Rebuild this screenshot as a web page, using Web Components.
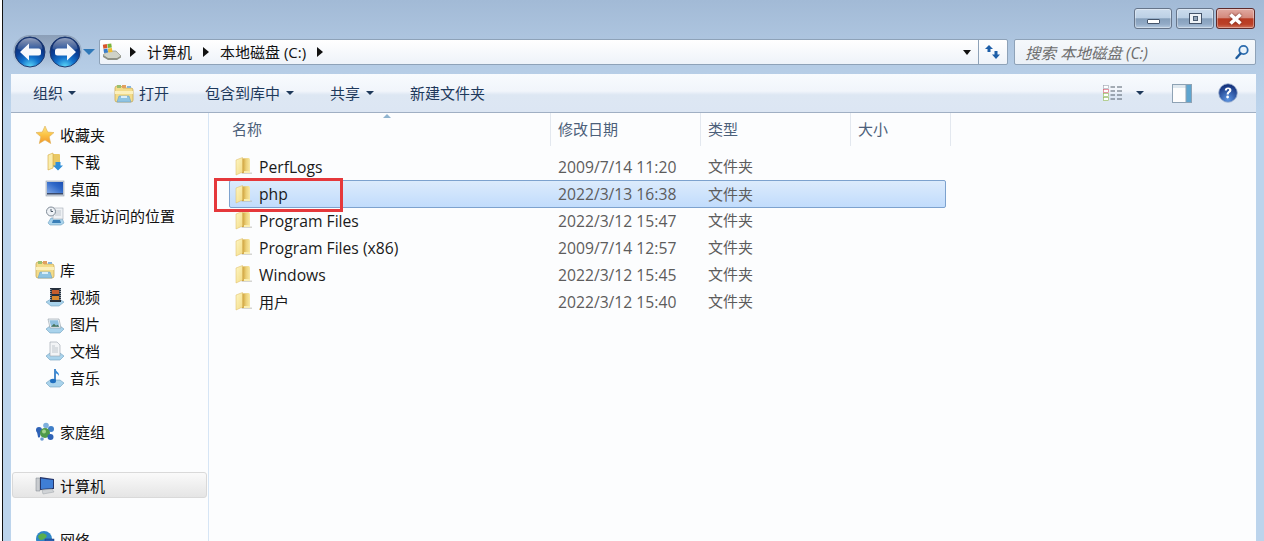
<!DOCTYPE html>
<html>
<head>
<meta charset="utf-8">
<title>本地磁盘 (C:)</title>
<style>
  html, body { margin: 0; height: 100%; overflow: hidden; }
  body { font: 15px "Open Sans", "Noto Sans CJK SC", sans-serif; }
</style>
</head>
<body>
<explorer-window>
  <title-bar slot="top"></title-bar>
  <address-row slot="top"></address-row>
  <command-bar slot="top"></command-bar>
  <nav-pane slot="nav"></nav-pane>
  <file-list slot="main"></file-list>
</explorer-window>

<script>
const FONT = `"Open Sans", "Noto Sans CJK SC", sans-serif`;
const CJK = `"Noto Sans CJK SC", "Open Sans", sans-serif`;

const navGlobe = (id, arrow) => `<svg width="34" height="34" viewBox="0 0 34 34"><defs><radialGradient id="${id}" cx=".5" cy="1" r=".85"><stop offset="0" stop-color="#5fdcfb"/><stop offset=".38" stop-color="#1272cc"/><stop offset=".7" stop-color="#0a3f96"/><stop offset="1" stop-color="#0b2c70"/></radialGradient><linearGradient id="${id}g" x1="0" y1="0" x2="0" y2="1"><stop offset="0" stop-color="#fff" stop-opacity=".55"/><stop offset="1" stop-color="#fff" stop-opacity=".08"/></linearGradient></defs><circle cx="17" cy="17" r="15" fill="url(#${id})" stroke="#1f3a70"/><path d="M4.500 14a12.500 11 0 0 1 25 0q-12.500 5-25 0z" fill="url(#${id}g)"/><path d="${arrow}" fill="#f7f9fc"/></svg>`;

const ICONS = {
  back: navGlobe("b", "M7 17l9-8.500v5h9.500q2.500 0 2.500 2.500v2q0 2.500-2.500 2.500H16v5z"),
  forward: navGlobe("f", "M28 17l-9-8.500v5H9.500Q7 13.500 7 16v2q0 2.500 2.500 2.500H19v5z"),
  folder: `<svg width="18" height="19" viewBox="0 0 18 19"><defs><linearGradient id="k" x1="0" y1="0" x2="1" y2="1"><stop offset="0" stop-color="#fdf6c4"/><stop offset="1" stop-color="#f4dc86"/></linearGradient><linearGradient id="m" x1="0" y1="0" x2="1" y2="0"><stop offset="0" stop-color="#c99a34"/><stop offset=".5" stop-color="#ecd077"/><stop offset="1" stop-color="#f8e9a6"/></linearGradient></defs><path d="M8 15.500h9v1.500H6z" fill="#b5b5ad" opacity=".55"/><path d="M7 1.500l6.500-.5q1.500 0 1.500 1.500V16H7z" fill="url(#m)"/><path d="M1 3l6.500-2.500V15l-6.500 3z" fill="url(#k)" stroke="#dcb95e" stroke-width=".5"/><path d="M9 14h6v2H9z" fill="#faedb0"/></svg>`,
  library: `<svg width="20" height="19" viewBox="0 0 20 19"><path d="M1 4q0-2 2-2h4l2 2h8q2 0 2 2v10q0 2-2 2H3q-2 0-2-2z" fill="#f3dc8a" stroke="#c9a957" stroke-width=".8"/><rect x="3" y="1" width="4" height="3" fill="#9bbf6e"/><rect x="8" y="1" width="4" height="3" fill="#e0a060"/><rect x="13" y="2" width="4" height="2" fill="#88b4d8"/><path d="M1 7h18v3H1z" fill="#fbf0bd"/><path d="M5 12h10l2 6H3z" fill="#8fc4e2" stroke="#6fa3c4" stroke-width=".6"/><path d="M7 12h6v2H7z" fill="#d9eefa"/></svg>`,
  star: `<svg width="20" height="20" viewBox="0 0 20 20"><defs><linearGradient id="s" x1="0" y1="0" x2="0" y2="1"><stop offset="0" stop-color="#fde68a"/><stop offset=".5" stop-color="#fbc344"/><stop offset="1" stop-color="#f3962a"/></linearGradient></defs><path d="M10 1l2.700 6 6.300.6-4.800 4.200 1.500 6.700L10 15l-5.700 3.500 1.500-6.700L1 7.600 7.300 7z" fill="url(#s)" stroke="#dcae55" stroke-width=".6"/></svg>`,
  download: `<svg width="18" height="20" viewBox="0 0 18 20"><path d="M7 2h6q1 0 1 1v12H7z" fill="#e9c863"/><path d="M2 3l5-2v15l-5 2z" fill="#faedac" stroke="#d3a63c" stroke-width=".6"/><path d="M9.500 10h5v3.500h2.500L12 18.500l-5-5h2.500z" fill="#2f8fd8"/></svg>`,
  desktop: `<svg width="20" height="18" viewBox="0 0 20 18"><defs><linearGradient id="d" x1="0" y1="1" x2="1" y2="0"><stop offset="0" stop-color="#7ea6e6"/><stop offset=".6" stop-color="#2f68c8"/><stop offset="1" stop-color="#1c4fb2"/></linearGradient></defs><rect x="1" y="1" width="18" height="15" fill="#cdd4de" stroke="#9aa3ae" stroke-width=".6"/><rect x="2" y="2" width="16" height="11" fill="url(#d)"/><rect x="2" y="13" width="16" height="1.500" fill="#3a4a6b"/></svg>`,
  recent: `<svg width="20" height="20" viewBox="0 0 20 20"><path d="M6 12h11l2 5-3 2H5l-2-2z" fill="#a9d3ec" stroke="#6f9fbd" stroke-width=".6"/><rect x="8" y="2" width="10" height="11" fill="#eef1f4" stroke="#a4acb5" stroke-width=".6"/><path d="M10 5h6M10 7h6M10 9h6" stroke="#c1c8cf"/><circle cx="6" cy="5.500" r="4.500" fill="#eef2f6" stroke="#7f8a96"/><path d="M6 3v2.500h2" fill="none" stroke="#4d5a68"/><path d="M8 14h7l1 3H7z" fill="#3a7fb8"/></svg>`,
  video: `<svg width="20" height="20" viewBox="0 0 20 20"><path d="M1 15l5-3h8l5 3-5 4H6z" fill="#a9d3ec" stroke="#6f9fbd" stroke-width=".6"/><rect x="5" y="1" width="11" height="14" fill="#26303c"/><rect x="7" y="3" width="7" height="4" fill="#c55d2d"/><rect x="7" y="9" width="7" height="4" fill="#d8892f"/><path d="M5.800 2v12M15.200 2v12" stroke="#cfd6dc" stroke-dasharray="1 1"/></svg>`,
  pictures: `<svg width="20" height="20" viewBox="0 0 20 20"><path d="M1 15l4-3h10l4 3-4 4H5z" fill="#a9d3ec" stroke="#6f9fbd" stroke-width=".6"/><path d="M3 5h11l2 9H5z" fill="#eef3f6" stroke="#8f9ca6" stroke-width=".6"/><path d="M4.500 6.300h8.500l1.300 6.400H6z" fill="#8fc0df"/><path d="M6 12.700l3-3 2 2 1.500-1 1.800 2z" fill="#48745a"/></svg>`,
  docs: `<svg width="20" height="20" viewBox="0 0 20 20"><path d="M1 15l4-3h10l4 3-4 4H5z" fill="#a9d3ec" stroke="#6f9fbd" stroke-width=".6"/><path d="M5 1h7l3 3v11H5z" fill="#f2f4f6" stroke="#99a3ad" stroke-width=".6"/><path d="M7 5h3M7 7h6M7 9h6M7 11h6" stroke="#b4bcc4" stroke-width=".8"/></svg>`,
  music: `<svg width="20" height="20" viewBox="0 0 20 20"><path d="M1 15l4-3h10l4 3-4 4H5z" fill="#a9d3ec" stroke="#6f9fbd" stroke-width=".6"/><path d="M10 1v11.500" stroke="#1f6fc0" stroke-width="1.600"/><ellipse cx="8" cy="13" rx="3" ry="2.200" fill="#1f6fc0"/><path d="M10.500 1c.5 3 4 3 3.500 7-1-2-2.500-2.500-3.500-3z" fill="#2f86d6"/></svg>`,
  homegroup: `<svg width="20" height="20" viewBox="0 0 20 20"><circle cx="4" cy="8" r="3" fill="#2e62b6"/><path d="M2 10q2-1 4 0l-1 5q-1.500 1-2 0z" fill="#2e62b6"/><circle cx="16" cy="7" r="3" fill="#3f7fc8"/><circle cx="11" cy="3.500" r="2.800" fill="#7db0dc"/><circle cx="10" cy="11" r="5" fill="#4f9a4a"/><circle cx="9" cy="9.500" r="2" fill="#a4d48c"/><circle cx="15.500" cy="15" r="3" fill="#2e62b6"/><circle cx="7" cy="17" r="1.800" fill="#6a9ad0"/></svg>`,
  computer: `<svg width="20" height="20" viewBox="0 0 20 20"><path d="M1 3h4v13H1z" fill="#c9ccd0" stroke="#7b828a" stroke-width=".5"/><path d="M5 2l14 2v10L5 15z" fill="#25356a"/><path d="M6 3.500l12 1.500v8L6 14z" fill="#3f7ed6"/><path d="M7 15l10-1 2 3-11 2z" fill="#d0d3d6" stroke="#9aa0a6" stroke-width=".5"/></svg>`,
  network: `<svg width="20" height="20" viewBox="0 0 20 20"><circle cx="9" cy="9" r="8" fill="#2f86c8"/><path d="M3 6q3-4 7-2t-1 5-6-3zM10 12q4-2 5 1t-3 4z" fill="#59ad4e"/><rect x="10" y="9" width="9" height="8" fill="#2a5fb0" stroke="#1f3f78" stroke-width=".5"/></svg>`,
  drive: `<svg width="20" height="18" viewBox="0 0 20 18"><path d="M1 12l5-4h8l5 5-4 3H6z" fill="#cfd2c7" stroke="#7e8277" stroke-width=".6"/><path d="M1 12l5 3h9l4-2v1.500l-4 2.500H6l-5-3z" fill="#8e9186"/><g transform="rotate(-8 6 6)"><rect x="1.500" y="1" width="4" height="4" fill="#d8542c"/><rect x="6" y="1" width="4" height="4" fill="#7bb33a"/><rect x="1.500" y="5.500" width="4" height="4" fill="#3a7dc8"/><rect x="6" y="5.500" width="4" height="4" fill="#f0bd30"/></g></svg>`,
  refresh: `<svg width="18" height="16" viewBox="0 0 18 16"><path d="M5 1L1 5h2.500v3h3V5H9z" fill="#1e5fa8"/><path d="M12 15l4-4.500h-2.500V7h-3v3.500H8z" fill="#1e5fa8"/></svg>`,
  search: `<svg width="16" height="16" viewBox="0 0 16 16"><circle cx="9.500" cy="6" r="4.200" fill="#eaf3fb" stroke="#2c6cae" stroke-width="1.800"/><path d="M6.500 9.500L2.500 14" stroke="#1d5a9c" stroke-width="2.400" stroke-linecap="round"/></svg>`,
  details: `<svg width="20" height="17" viewBox="0 0 20 17"><g fill="#fff" stroke="#9aa3ad" stroke-width=".6"><rect x=".5" y=".5" width="5" height="3"/><rect x=".5" y="4.500" width="5" height="3" stroke="#d8566a"/><rect x=".5" y="8.500" width="5" height="3" stroke="#90b850"/><rect x=".5" y="12.500" width="5" height="3" stroke="#90b850"/></g><path d="M7.500 2h4.500M14 2h5M7.500 6h4.500M14 6h5M7.500 10h4.500M14 10h5M7.500 14h4.500M14 14h5" stroke="#55606c"/></svg>`,
  preview: `<svg width="20" height="19" viewBox="0 0 20 19"><rect x=".5" y=".5" width="19" height="18" fill="#fdfdfd" stroke="#8ea2b4"/><rect x="1" y="1" width="18" height="3" fill="#dfe8ef"/><rect x="14" y="1" width="5" height="17" fill="#5fa5cf"/><rect x="13.500" y="1" width="1" height="17" fill="#8ea2b4"/></svg>`,
  help: `<svg width="20" height="20" viewBox="0 0 20 20"><defs><radialGradient id="h" cx=".5" cy=".85" r=".75"><stop offset="0" stop-color="#5b94e2"/><stop offset="1" stop-color="#16347f"/></radialGradient></defs><circle cx="10" cy="10" r="9.300" fill="url(#h)" stroke="#9fb2cf" stroke-width=".8"/><path d="M6.800 7.500q0-3 3.300-3 3.300 0 3.300 2.700 0 1.600-1.700 2.500-1 .6-1 1.800H8.600q0-2.100 1.400-3 1.200-.7 1.200-1.500 0-.9-1.100-.9-1.100 0-1.300 1.400z" fill="#fff"/><circle cx="9.600" cy="14" r="1.400" fill="#fff"/></svg>`
};

class TitleBar extends HTMLElement {
  constructor() {
    super();
    this.attachShadow({ mode: "open" });
    this.shadowRoot.innerHTML = `
    <style>
      :host { display: flex; justify-content: flex-end; height: 35px; padding-right: 9px; box-sizing: border-box; }
      .btns { display: flex; height: 21px; margin-top: 8px; }
      .btn {
        width: 38px; height: 21px; box-sizing: border-box; margin-right: 4px;
        border: 1px solid #66758a; border-radius: 3px;
        display: flex; align-items: center; justify-content: center;
        background: linear-gradient(#ccdced 0, #bcd0e5 45%, #86a0bc 52%, #93abc7 80%, #b6cbe0 100%);
        box-shadow: inset 0 0 0 1px rgba(255,255,255,.35);
      }
      .btn.mid { margin-right: 2px; }
      .close {
        width: 39px; margin-right: 0; border-color: #5e2b2b;
        background: linear-gradient(#e0aaa2 0, #d48a7d 45%, #b83a22 52%, #bb4128 80%, #d0735c 100%);
      }
      .min { width: 13px; height: 5px; background: #fff; border: 1px solid #44546a; border-radius: 1px; margin-top: 6px; box-sizing: border-box; }
      .max { width: 13px; height: 11px; border: 1px solid #44546a; background: #eef3f8; box-sizing: border-box; display: flex; align-items: center; justify-content: center; }
      .max i { display: block; width: 5px; height: 5px; background: #93a6ba; border: 1px solid #4c5d72; box-sizing: border-box; }
      svg { display: block; filter: drop-shadow(0 0 1px #6b2a20); }
    </style>
    <div class="btns">
      <div class="btn"><div class="min"></div></div>
      <div class="btn mid"><div class="max"><i></i></div></div>
      <div class="btn close"><svg width="15" height="12" viewBox="0 0 15 12"><path d="M2.500 1.500l10 9M12.500 1.500l-10 9" fill="none" stroke="#fff" stroke-width="3.600"/></svg></div>
    </div>`;
  }
}

class AddressRow extends HTMLElement {
  constructor() {
    super();
    this.attachShadow({ mode: "open" });
    this.shadowRoot.innerHTML = `
    <style>
      :host { display: flex; align-items: center; height: 34px; color: #111; font: 15px ${FONT}; }
      .nav { margin-left: 10px; display: flex; align-items: center; flex: none; }
      .pair { display: flex; gap: 1px; height: 34px; border-radius: 17px; background: linear-gradient(rgba(128,146,170,.75), rgba(185,205,228,.3)); }
      .pair svg { display: block; }
      .drop { width: 0; height: 0; border: 6px solid transparent; border-top: 6px solid #2f78b8; border-bottom: 0; margin-left: 1px; }
      .addr {
        flex: 1; height: 26px; box-sizing: border-box; margin-left: 4px;
        border: 1px solid #8ea2b8; border-radius: 2px;
        background: linear-gradient(#fff, #eef3f9);
        display: flex; align-items: center;
      }
      .crumbs { flex: 1; display: flex; align-items: center; padding-left: 2px; }
      .crumbs svg { display: block; margin-right: -3px; }
      .sep { width: 0; height: 0; border: 5px solid transparent; border-left: 6px solid #111; border-right: 0; margin: 0 11px; }
      .crumbs span { line-height: 20px; }
      .dd { width: 0; height: 0; border: 4px solid transparent; border-top: 5px solid #111; border-bottom: 0; margin-right: 7px; }
      .go { width: 28px; height: 24px; border-left: 1px solid #8ea2b8; display: flex; align-items: center; justify-content: center; }
      .go svg { display: block; }
      .search {
        width: 242px; height: 26px; box-sizing: border-box; margin: 0 8px 0 6px; flex: none;
        border: 1px solid #8ea2b8; border-radius: 2px;
        background: linear-gradient(#f5f8fb, #eaf0f7);
        display: flex; align-items: center; padding: 0 5px 0 10px;
        color: #6d6d6d; font-style: italic; font-size: 15.500px;
      }
      .search span { flex: 1; }
    </style>
    <div class="nav"><div class="pair">${ICONS.back}${ICONS.forward}</div><div class="drop"></div></div>
    <div class="addr">
      <div class="crumbs">${ICONS.drive}
        <div class="sep"></div><span>计算机</span>
        <div class="sep"></div><span>本地磁盘 (C:)</span>
        <div class="sep"></div>
      </div>
      <div class="dd"></div>
      <div class="go">${ICONS.refresh}</div>
    </div>
    <div class="search"><span>搜索 本地磁盘 (C:)</span>${ICONS.search}</div>`;
  }
}

class CommandBar extends HTMLElement {
  constructor() {
    super();
    this.attachShadow({ mode: "open" });
    this.shadowRoot.innerHTML = `
    <style>
      :host {
        display: flex; align-items: center; height: 39px; box-sizing: border-box;
        margin: 5px 8px 0 8px; padding: 0 18px 0 22px;
        background: linear-gradient(#f8fbfe 0, #f1f5fb 45%, #dde7f3 55%, #dce6f3 100%);
        border-bottom: 1px solid #a0afc3;
        color: #1e395b; font: 15px ${FONT};
      }
      .item { display: flex; align-items: center; line-height: 20px; white-space: nowrap; }
      .caret { width: 0; height: 0; border: 4px solid transparent; border-top: 4px solid #1e395b; border-bottom: 0; margin-left: 6px; }
      .first .caret { margin-left: 5px; }
      svg { display: block; }
      .open { margin-left: 38px; gap: 5px; }
      .inc, .share, .newf { margin-left: 36px; }
      .right { margin-left: auto; display: flex; align-items: center; }
      .right .caret { margin: 0 28px 0 13px; }
      .right .help { margin-left: 26px; }
    </style>
    <div class="item first">组织<span class="caret"></span></div>
    <div class="item open">${ICONS.library}打开</div>
    <div class="item inc">包含到库中<span class="caret"></span></div>
    <div class="item share">共享<span class="caret"></span></div>
    <div class="item newf">新建文件夹</div>
    <div class="right">${ICONS.details}<span class="caret"></span>${ICONS.preview}<span class="help">${ICONS.help}</span></div>`;
  }
}

class NavItem extends HTMLElement {
  constructor() {
    super();
    this.attachShadow({ mode: "open" });
    const icon = ICONS[this.getAttribute("icon")];
    this.shadowRoot.innerHTML = `
    <style>
      :host { display: flex; align-items: center; height: 27px; padding-left: 24px; gap: 5px; white-space: nowrap; box-sizing: border-box; }
      :host([sub]) { padding-left: 34px; }
      :host([current]) {
        margin: 0 1px; padding-left: 22px; height: 26px;
        border: 1px solid #d9d9d9; border-radius: 3px;
        background: linear-gradient(#fafafa, #e5e5e5);
      }
      .i { width: 20px; display: flex; justify-content: center; flex: none; }
      svg { display: block; }
    </style>
    <span class="i">${icon}</span><slot></slot>`;
  }
}

class NavPane extends HTMLElement {
  constructor() {
    super();
    this.attachShadow({ mode: "open" });
    this.shadowRoot.innerHTML = `
    <style>
      :host {
        display: block; width: 198px; flex: none; box-sizing: border-box; height: 100%;
        border-right: 1px solid #d6e5f5; background: #fcfdfe; color: #111;
        font: 15px ${CJK}; padding-top: 8px; overflow: hidden;
      }
      .group { margin-bottom: 28px; }
      .g1 { margin-bottom: 27px; }
      .g2 { margin-bottom: 27px; }
      .tight { margin-top: -1px; }
    </style>
    <div class="group g1">
      <nav-item icon="star">收藏夹</nav-item>
      <nav-item icon="download" sub>下载</nav-item>
      <nav-item icon="desktop" sub>桌面</nav-item>
      <nav-item icon="recent" sub>最近访问的位置</nav-item>
    </div>
    <div class="group g2">
      <nav-item icon="library">库</nav-item>
      <nav-item icon="video" sub>视频</nav-item>
      <nav-item icon="pictures" sub>图片</nav-item>
      <nav-item icon="docs" sub>文档</nav-item>
      <nav-item icon="music" sub>音乐</nav-item>
    </div>
    <div class="group"><nav-item icon="homegroup">家庭组</nav-item></div>
    <div class="group tight"><nav-item icon="computer" current>计算机</nav-item></div>
    <div class="group"><nav-item icon="network">网络</nav-item></div>`;
  }
}

class FileRow extends HTMLElement {
  constructor() {
    super();
    this.attachShadow({ mode: "open" });
    this.shadowRoot.innerHTML = `
    <style>
      :host {
        display: grid; grid-template-columns: 320px 150px 1fr; align-items: center;
        height: 27px; box-sizing: border-box; width: 717px; margin-left: 20px;
        border: 1px solid transparent; border-radius: 2px; white-space: nowrap;
        font-size: 15.700px;
      }
      :host([selected]) {
        border-color: #7da2ce; height: 28px; margin-bottom: -1px;
        background: linear-gradient(#dcebfc, #c1dcfc);
      }
      .name { display: flex; align-items: center; gap: 6px; padding-left: 5px; color: #1a1a1a; }
      .date, .type { color: #5c5c5c; padding-left: 8px; }
      .type { font-size: 15px; margin-top: -2px; }
      :host([cjk]) .name span { font-size: 15px; }
      svg { display: block; }
    </style>
    <div class="name">${ICONS.folder}<span>${this.getAttribute("name")}</span></div>
    <div class="date">${this.getAttribute("date")}</div>
    <div class="type">文件夹</div>`;
  }
}

class FileList extends HTMLElement {
  constructor() {
    super();
    this.attachShadow({ mode: "open" });
    this.shadowRoot.innerHTML = `
    <style>
      :host {
        display: block; flex: 1; min-width: 0; position: relative; background: #fcfdfe;
        font: 15px ${FONT};
      }
      .head { display: flex; height: 33px; margin-left: 2px; color: #4c607a; margin-bottom: 7px; }
      .col { box-sizing: border-box; padding: 3px 0 0 0; border-right: 1px solid #e3e8ef; line-height: 26px; position: relative; }
      .c1 { width: 340px; padding-left: 21px; }
      .c2 { width: 150px; padding-left: 7px; }
      .c3 { width: 150px; padding-left: 7px; }
      .c4 { width: 100px; padding-left: 7px; }
      .sort { position: absolute; left: 172px; top: 1px; width: 0; height: 0; border: 4px solid transparent; border-bottom: 4px solid #8fb4cf; border-top: 0; }
      .mark { position: absolute; left: 5px; top: 65px; width: 129px; height: 34px; box-sizing: border-box; border: 3px solid #e5383b; pointer-events: none; }
    </style>
    <div class="head">
      <div class="col c1">名称<span class="sort"></span></div>
      <div class="col c2">修改日期</div>
      <div class="col c3">类型</div>
      <div class="col c4">大小</div>
    </div>
    <file-row name="PerfLogs" date="2009/7/14 11:20"></file-row>
    <file-row name="php" date="2022/3/13 16:38" selected></file-row>
    <file-row name="Program Files" date="2022/3/12 15:47"></file-row>
    <file-row name="Program Files (x86)" date="2009/7/14 12:57"></file-row>
    <file-row name="Windows" date="2022/3/12 15:45"></file-row>
    <file-row name="用户" date="2022/3/12 15:40" cjk></file-row>
    <div class="mark"></div>`;
  }
}

class ExplorerWindow extends HTMLElement {
  constructor() {
    super();
    this.attachShadow({ mode: "open" });
    this.shadowRoot.innerHTML = `
    <style>
      :host {
        display: flex; flex-direction: column; height: 541px; box-sizing: border-box;
        padding-left: 8px; border-left: 3px solid #fff; position: relative;
        background: linear-gradient(#a2bad6 0, #b6cde6 70px, #bcd4ec 110px);
      }
      :host::before { content: ""; position: absolute; left: -1px; top: 0; bottom: 0; width: 1px; background: #111; }
      .top { flex: none; margin-left: -8px; }
      .body { flex: 1; display: flex; min-height: 0; margin-right: 8px; }
    </style>
    <div class="top"><slot name="top"></slot></div>
    <div class="body"><slot name="nav"></slot><slot name="main"></slot></div>`;
  }
}

customElements.define("nav-item", NavItem);
customElements.define("title-bar", TitleBar);
customElements.define("address-row", AddressRow);
customElements.define("command-bar", CommandBar);
customElements.define("nav-pane", NavPane);
customElements.define("file-row", FileRow);
customElements.define("file-list", FileList);
customElements.define("explorer-window", ExplorerWindow);
</script>
</body>
</html>
